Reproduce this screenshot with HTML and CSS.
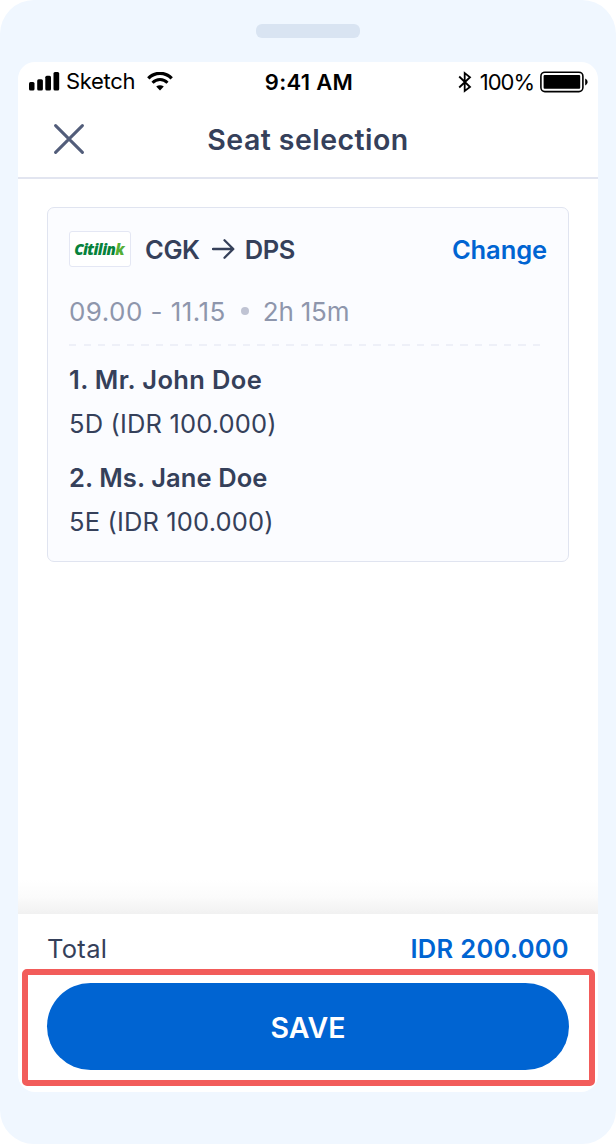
FILE: index.html
```html
<!DOCTYPE html>
<html lang="en">
<head>
    <meta charset="utf-8">
    <title>Seat selection</title>
    <link rel="stylesheet" href="styles.css">
</head>
<body>
    <div class="phone">
        <div class="speaker"></div>
        <div class="screen">
            <div class="status-bar">
                <div class="status-left">
                    <svg class="signal" width="31" height="19" viewBox="0 0 31 19">
                        <rect x="0" y="10" width="5.5" height="8.5" rx="1.5"/>
                        <rect x="8.2" y="7.3" width="5.7" height="11.2" rx="1.5"/>
                        <rect x="16.3" y="3.7" width="5.7" height="14.8" rx="1.5"/>
                        <rect x="24.5" y="0" width="5.7" height="18.5" rx="1.5"/>
                    </svg>
                    <span class="carrier">Sketch</span>
                    <svg class="wifi" width="26" height="19" viewBox="0 0 26 19">
                        <path d="M1.3 6.4C7.8-.4 18.2-.4 24.7 6.4" fill="none" stroke="#000" stroke-width="3.2"/>
                        <path d="M5.5 10.7C9.8 6.5 16.2 6.5 20.5 10.7" fill="none" stroke="#000" stroke-width="3"/>
                        <path d="M9.2 14.4C11.3 12.8 14.7 12.8 16.8 14.4L13 18.4Z"/>
                    </svg>
                </div>
                <div class="time">9:41 AM</div>
                <div class="status-right">
                    <svg class="bluetooth" width="14" height="22" viewBox="0 0 14 22">
                        <path d="M1.2 5.5L12 16L6.7 20V2L12 6.2L1.2 16.5" fill="none" stroke="#000" stroke-width="1.8"/>
                    </svg>
                    <span class="percent">100%</span>
                    <svg class="battery" width="49" height="22" viewBox="0 0 49 22">
                        <rect x=".9" y="1.2" width="42" height="19.4" rx="4" fill="none" stroke="#000" stroke-width="1.6"/>
                        <rect x="3.6" y="4" width="36.6" height="13.8" rx="1"/>
                        <path d="M45.2 7.6C48.4 9 48.4 13 45.2 14.4Z"/>
                    </svg>
                </div>
            </div>
            <div class="nav">
                <svg class="close" width="30" height="30" viewBox="0 0 30 30">
                    <path d="M1.6 1.6L28.4 28.4M28.4 1.6L1.6 28.4" fill="none" stroke="#525d7a" stroke-width="3" stroke-linecap="round"/>
                </svg>
                <h1 class="title">Seat selection</h1>
            </div>
            <div class="content">
                <div class="card">
                    <div class="route">
                        <div class="airline"><span>Citilin<b>k</b></span></div>
                        <span class="airport">CGK</span>
                        <svg class="arrow" width="23" height="20" viewBox="0 0 23 20">
                            <path d="M1 10H21M12.5 1.3L21.3 10L12.5 18.7" fill="none" stroke="#35405a" stroke-width="2.3" stroke-linecap="round" stroke-linejoin="round"/>
                        </svg>
                        <span class="airport">DPS</span>
                        <a class="change">Change</a>
                    </div>
                    <div class="schedule">
                        <span class="hours">09.00 - 11.15</span>
                        <span class="dot"></span>
                        <span class="duration">2h 15m</span>
                    </div>
                    <div class="divider"></div>
                    <div class="passenger">
                        <div class="name first">1. Mr. John Doe</div>
                        <div class="seat">5D (IDR 100.000)</div>
                    </div>
                    <div class="passenger">
                        <div class="name">2. Ms. Jane Doe</div>
                        <div class="seat">5E (IDR 100.000)</div>
                    </div>
                </div>
            </div>
            <div class="fade"></div>
            <div class="footer">
                <div class="total">
                    <span class="total-label">Total</span>
                    <span class="total-price">IDR 200.000</span>
                </div>
                <div class="highlight">
                    <button class="save">SAVE</button>
                </div>
            </div>
        </div>
    </div>
</body>
</html>
```
FILE: styles.css
```css
* {
    box-sizing: border-box;
}
body {
    margin: 0;
    background: #fff;
    font-family: Inter, "Liberation Sans", sans-serif;
    color: #35405a;
}
.phone {
    width: 616px;
    height: 1144px;
    padding: 24px 18px 0;
    border-radius: 34px;
    background: #f0f7ff;
}
.speaker {
    width: 104px;
    height: 14px;
    margin: 0 auto 24px;
    border-radius: 6px;
    background: #d9e4f2;
}
.screen {
    display: flex;
    flex-direction: column;
    height: 1030px;
    border-radius: 17px;
    background: #fff;
}
.status-bar {
    display: grid;
    grid-template-columns: 1fr auto 1fr;
    align-items: center;
    height: 40px;
    padding: 0 9px 0 11px;
    color: #000;
    font-size: 22px;
    line-height: 40px;
}
.status-left,
.status-right {
    display: flex;
    align-items: center;
    height: 38px;
    padding-bottom: 2px;
}
.status-right {
    justify-content: flex-end;
    padding-bottom: 1px;
}
.carrier {
    margin: 0 12px 0 6px;
    letter-spacing: -0.3px;
}
.time {
    font-weight: 600;
    letter-spacing: 0.3px;
}
.percent {
    margin: 0 6px 0 8px;
    letter-spacing: -1px;
}
.nav {
    display: grid;
    grid-template-columns: 30px 1fr 30px;
    align-items: center;
    height: 77px;
    padding: 0 36px 1px;
    border-bottom: 2px solid #e2e5f0;
}
.title {
    margin: 0;
    font-size: 28.5px;
    font-weight: 600;
    text-align: center;
    letter-spacing: 0.45px;
}
.content {
    flex: 1;
    padding: 28px 29px 0;
}
.card {
    height: 355px;
    padding: 23px 21px 0;
    border: 1px solid #e0e4f0;
    border-radius: 7px;
    background: #fbfcff;
}
.route {
    display: flex;
    align-items: center;
    height: 36px;
    font-size: 25.5px;
    font-weight: 600;
}
.airline {
    width: 62px;
    height: 36px;
    margin-right: 14px;
    padding-right: 2px;
    border: 1px solid #e4e7f4;
    border-radius: 3px;
    background: #fff;
    color: #06823b;
    font: italic 800 15px/34px "Open Sans", sans-serif;
    letter-spacing: -0.6px;
    text-align: center;
}
.airline b {
    color: #55ae35;
}
.airport {
    letter-spacing: -0.4px;
}
.arrow {
    margin: 0 10px 0 12px;
}
.change {
    margin-left: auto;
    color: #0064d2;
    letter-spacing: -0.1px;
}
.schedule {
    display: flex;
    align-items: center;
    height: 32px;
    margin-top: 28px;
    color: #8e96ac;
    font-size: 26px;
}
.hours {
    letter-spacing: 0.45px;
}
.dot {
    width: 8px;
    height: 8px;
    margin: 0 14px 0 15px;
    border-radius: 50%;
    background: #bfc3d3;
}
.duration {
    letter-spacing: -0.2px;
}
.divider {
    width: 471px;
    height: 2px;
    margin-top: 17px;
    background: repeating-linear-gradient(to right, #eef0f8 0, #eef0f8 7px, transparent 7px, transparent 14.5px);
}
.passenger {
    margin-top: 17px;
    font-size: 25.5px;
    line-height: 34px;
}
.name {
    font-weight: 600;
    letter-spacing: 0.1px;
}
.name.first {
    letter-spacing: 0.35px;
}
.seat {
    margin-top: 10px;
    letter-spacing: 0.15px;
}
.passenger + .passenger {
    margin-top: 20px;
}
.fade {
    height: 34px;
    background: linear-gradient(to bottom, #fff, #fbfbfb 50%, #f1f1f1);
}
.footer {
    height: 178px;
}
.total {
    display: flex;
    justify-content: space-between;
    height: 55px;
    padding: 18px 29px 0;
    font-size: 25.5px;
    line-height: 34px;
}
.total-label {
    letter-spacing: 0.3px;
}
.total-price {
    color: #0064d2;
    font-weight: 600;
    letter-spacing: 0.3px;
}
.highlight {
    width: 573px;
    height: 117px;
    margin-left: 4px;
    padding: 8px 19px 0;
    border: 6px solid #f25c5a;
    border-radius: 5px;
}
.save {
    display: block;
    width: 522px;
    height: 87px;
    padding: 2px 0 0;
    border: none;
    border-radius: 44px;
    background: #0064d2;
    color: #fff;
    font: 600 28.5px Inter, sans-serif;
}
```
